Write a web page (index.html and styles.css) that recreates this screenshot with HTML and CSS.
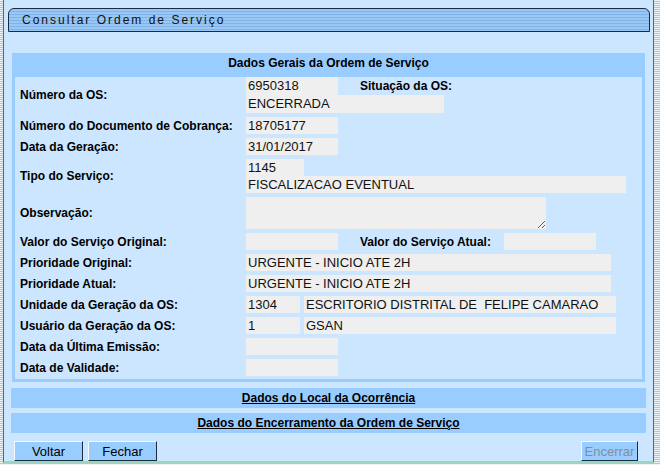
FILE: index.html
```html
<!DOCTYPE html>
<html lang="pt-BR">
<head>
    <meta charset="UTF-8">
    <title>Consultar Ordem de Serviço</title>
    <link rel="stylesheet" href="styles.css">
</head>
<body>
<div class="page">

    <div class="titulo"><span>Consultar Ordem de Serviço</span></div>

    <div class="conteudo">
        <div class="secao">
            <div class="secao-topo">Dados Gerais da Ordem de Serviço</div>
            <div class="secao-corpo">
                <div class="rotulo">Número da OS:</div>
                <div class="valor">
                    <div class="linha">
                        <span class="campo alto w92">6950318</span>
                        <span class="rotulo-meio">Situação da OS:</span>
                    </div>
                    <span class="campo alto w198">ENCERRADA</span>
                </div>

                <div class="rotulo">Número do Documento de Cobrança:</div>
                <div class="valor"><span class="campo w92">18705177</span></div>

                <div class="rotulo">Data da Geração:</div>
                <div class="valor"><span class="campo w92">31/01/2017</span></div>

                <div class="rotulo">Tipo do Serviço:</div>
                <div class="valor">
                    <span class="campo w58">1145</span>
                    <span class="campo w380">FISCALIZACAO EVENTUAL</span>
                </div>

                <div class="rotulo">Observação:</div>
                <div class="valor"><textarea class="obs" readonly></textarea></div>

                <div class="rotulo">Valor do Serviço Original:</div>
                <div class="valor">
                    <div class="linha">
                        <span class="campo w92"></span>
                        <span class="rotulo-meio">Valor do Serviço Atual:</span>
                        <span class="campo w92"></span>
                    </div>
                </div>

                <div class="rotulo">Prioridade Original:</div>
                <div class="valor"><span class="campo w365">URGENTE - INICIO ATE 2H</span></div>

                <div class="rotulo">Prioridade Atual:</div>
                <div class="valor"><span class="campo w365">URGENTE - INICIO ATE 2H</span></div>

                <div class="rotulo">Unidade da Geração da OS:</div>
                <div class="valor">
                    <div class="linha">
                        <span class="campo w54">1304</span>
                        <span class="campo w312">ESCRITORIO DISTRITAL DE&nbsp; FELIPE CAMARAO</span>
                    </div>
                </div>

                <div class="rotulo">Usuário da Geração da OS:</div>
                <div class="valor">
                    <div class="linha">
                        <span class="campo w54">1</span>
                        <span class="campo w312">GSAN</span>
                    </div>
                </div>

                <div class="rotulo">Data da Última Emissão:</div>
                <div class="valor"><span class="campo w92"></span></div>

                <div class="rotulo">Data de Validade:</div>
                <div class="valor"><span class="campo w92"></span></div>
            </div>
        </div>

        <div class="barra"><a href="#">Dados do Local da Ocorrência</a></div>
        <div class="barra"><a href="#">Dados do Encerramento da Ordem de Serviço</a></div>

        <div class="acoes">
            <button class="botao">Voltar</button>
            <button class="botao">Fechar</button>
            <button class="botao encerrar" disabled>Encerrar</button>
        </div>
    </div>

</div>
</body>
</html>
```

FILE: styles.css
```css
/* fundo da janela */
body {
    margin: 0;
    padding: 0;
    font-family: "Liberation Sans", Arial, sans-serif;
    background: repeating-linear-gradient(to bottom, #eef3f8 0, #eef3f8 1px, #b9c3cf 1px, #b9c3cf 2px);
    height: 465px;
    overflow: hidden;
}

.page {
    margin-left: 3px;
    width: 651px;
    height: 463px;
    background-color: #cce6ff;
    border-left: 1px solid #56657a;
    border-right: 1px solid #56657a;
    border-bottom: 2px solid #9ad6bd;
    padding: 8px 3px 0 4px;
    box-sizing: border-box;
}

/* barra de titulo */
.titulo {
    height: 24px;
    box-sizing: border-box;
    border: 1px solid #1c2a44;
    border-radius: 6px 6px 0 0;
    background: repeating-linear-gradient(to bottom, #9ac8f4 0, #9ac8f4 2px, #7fb2e8 2px, #7fb2e8 3px);
    padding-left: 13px;
    line-height: 22px;
    font-size: 12px;
    letter-spacing: 2px;
    color: #111;
}

.conteudo {
    margin: 21px 5px 0 4px;
}

.secao-topo {
    height: 21px;
    line-height: 21px;
    background-color: #99ccff;
    text-align: center;
    font-weight: bold;
    font-size: 12px;
}

.secao-corpo {
    border: 3px solid #99ccff;
    padding-bottom: 3px;
    display: grid;
    grid-template-columns: 231px 1fr;
    row-gap: 4px;
}

.rotulo {
    padding-left: 5px;
    font-size: 12px;
    font-weight: bold;
    display: flex;
    align-items: center;
}

.valor {
    display: flex;
    flex-direction: column;
    align-items: flex-start;
}

.linha {
    display: flex;
    align-items: center;
    gap: 4px;
}

.rotulo-meio {
    font-size: 12px;
    font-weight: bold;
    margin: 0 9px 0 18px;
}

.campo {
    display: block;
    height: 17px;
    line-height: 17px;
    background-color: #efefef;
    padding-left: 2px;
    box-sizing: border-box;
    font-size: 13px;
    white-space: pre;
    color: #111;
}

.campo.alto {
    height: 18px;
    line-height: 18px;
}

.w54 { width: 54px; }
.w58 { width: 58px; }
.w92 { width: 92px; }
.w198 { width: 198px; }
.w312 { width: 312px; }
.w365 { width: 365px; }
.w380 { width: 380px; }

.obs {
    width: 300px;
    height: 32px;
    margin: 0;
    border: none;
    background-color: #efefef;
    box-sizing: border-box;
    resize: both;
}

/* barras de links */
.barra {
    height: 20px;
    line-height: 20px;
    margin: 6px -1px 0 -1px;
    background-color: #99ccff;
    text-align: center;
    font-size: 12px;
    font-weight: bold;
}

.barra + .barra {
    margin-top: 5px;
}

.barra a {
    color: #000;
}

.acoes {
    display: flex;
    gap: 5px;
    margin-top: 8px;
    padding: 0 7px 0 2px;
}

.botao {
    width: 69px;
    height: 20px;
    padding: 0;
    font-family: "Liberation Sans", Arial, sans-serif;
    font-size: 13px;
    color: #000;
    background-color: #99ccff;
    border: 1px solid #f4f9ff;
    border-right-color: #1c2a44;
    border-bottom-color: #1c2a44;
    border-radius: 0;
}

.encerrar {
    margin-left: auto;
    width: 57px;
    color: #7f8fa0;
}
```
